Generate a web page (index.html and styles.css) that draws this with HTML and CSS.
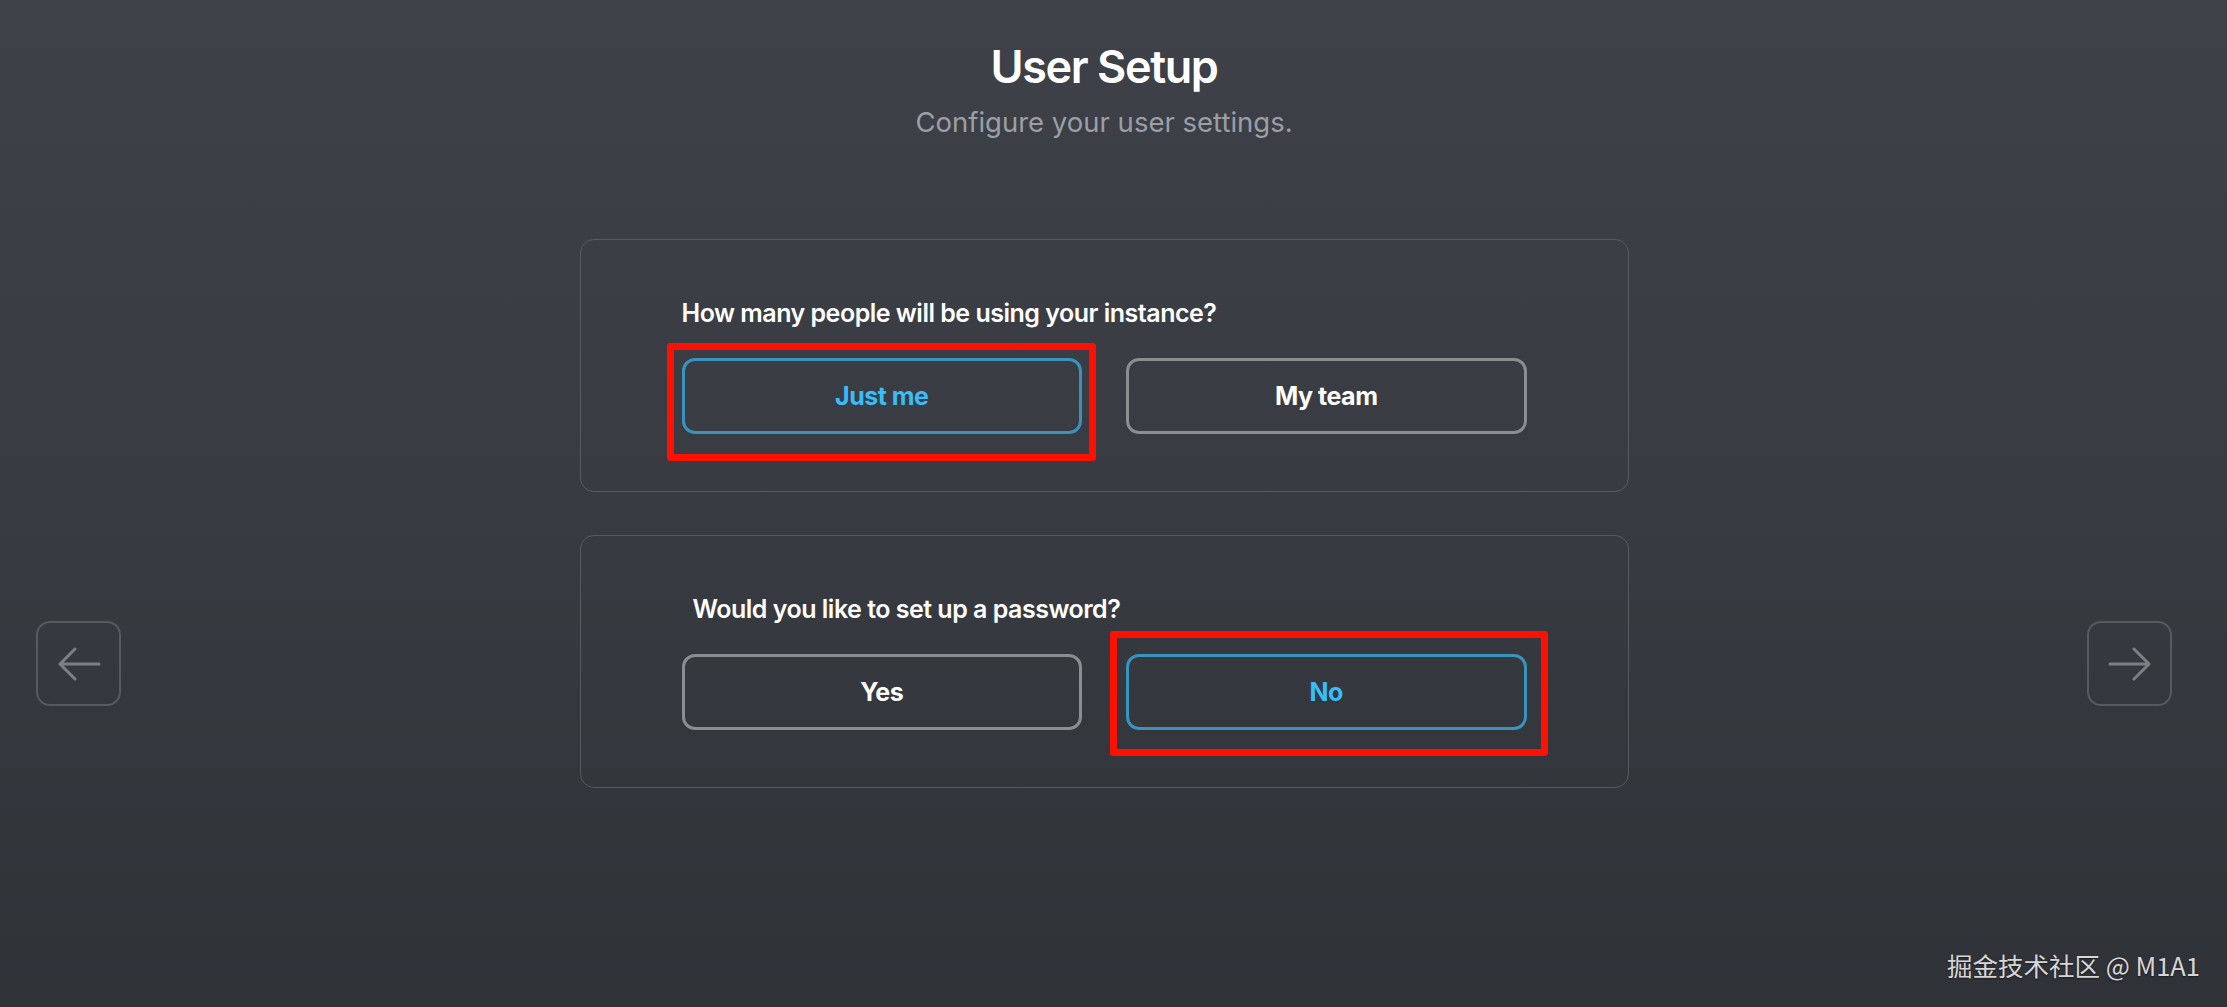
FILE: index.html
```html
<!DOCTYPE html>
<html lang="en">
<head>
    <meta charset="UTF-8">
    <title>User Setup</title>
    <link rel="stylesheet" href="styles.css">
</head>
<body>
    <div class="setup">
        <button class="nav-btn">
            <svg width="44" height="34" viewBox="0 0 44 34"><path d="M42 17H3M3 17L18 2M3 17L18 32"/></svg>
        </button>

        <main class="content">
            <h1>User Setup</h1>
            <p class="subtitle">Configure your user settings.</p>

            <section class="card">
                <h2 class="question">How many people will be using your instance?</h2>
                <div class="choices">
                    <div class="choice mark mark-first">
                        <button class="option selected">Just me</button>
                    </div>
                    <div class="choice">
                        <button class="option">My team</button>
                    </div>
                </div>
            </section>

            <section class="card">
                <h2 class="question question-inset">Would you like to set up a password?</h2>
                <div class="choices">
                    <div class="choice">
                        <button class="option">Yes</button>
                    </div>
                    <div class="choice mark mark-second">
                        <button class="option selected">No</button>
                    </div>
                </div>
            </section>
        </main>

        <button class="nav-btn">
            <svg width="44" height="34" viewBox="0 0 44 34"><path d="M2 17H41M41 17L26 2M41 17L26 32"/></svg>
        </button>
    </div>

    <div class="watermark">掘金技术社区 @ M1A1</div>
</body>
</html>
```

FILE: styles.css
```css
html, body {
    margin: 0;
    padding: 0;
    height: 100%;
}

body {
    background: linear-gradient(180deg, #3e4148 0%, #383b41 50%, #2f3237 100%);
    font-family: "Inter", "Noto Sans CJK SC", sans-serif;
    color: #ffffff;
    overflow: hidden;
}

.setup {
    width: calc(100% - 20px);
    display: grid;
    grid-template-columns: 85px 1fr 85px;
    padding: 0 35px 0 36px;
    box-sizing: border-box;
}

.nav-btn {
    margin-top: 621px;
    width: 85px;
    height: 85px;
    align-self: start;
    display: flex;
    align-items: center;
    justify-content: center;
    background: transparent;
    border: 2px solid #565a61;
    border-radius: 14px;
    padding: 0;
    cursor: pointer;
}

.nav-btn svg path {
    fill: none;
    stroke: #7b7f86;
    stroke-width: 3;
    stroke-linecap: round;
    stroke-linejoin: round;
}

.content {
    display: flex;
    flex-direction: column;
    align-items: center;
    padding-top: 39px;
}

h1 {
    margin: 0;
    font-size: 45px;
    line-height: 56px;
    font-weight: 600;
    letter-spacing: -1.4px;
}

.subtitle {
    margin: 11px 0 0;
    font-size: 27.5px;
    line-height: 32px;
    color: #9b9fa6;
    letter-spacing: 0;
}

.card {
    width: 1049px;
    box-sizing: border-box;
    margin-top: 43px;
    padding: 58px 101px 57px;
    border: 1px solid #575a61;
    border-radius: 14px;
}

.subtitle + .card {
    margin-top: 101px;
}

.question {
    margin: 0 0 30px;
    font-size: 25px;
    line-height: 30px;
    font-weight: 600;
    letter-spacing: -0.5px;
}

.question-inset {
    margin-left: 11px;
}

.choices {
    display: grid;
    grid-template-columns: 1fr 1fr;
    gap: 44px;
}

.choice {
    position: relative;
}

.option {
    width: 100%;
    height: 76px;
    background: transparent;
    border: 3px solid #8a8d92;
    border-radius: 13px;
    color: #ffffff;
    font-family: inherit;
    font-size: 25px;
    font-weight: 700;
    letter-spacing: -0.5px;
    cursor: pointer;
}

.option.selected {
    border-color: #3994bd;
    color: #38bdf8;
}

/* red annotation frames around the chosen answers */
.mark::after {
    content: "";
    position: absolute;
    border: 7px solid #ff1000;
    border-radius: 3px;
    pointer-events: none;
}

.mark-first::after {
    top: -15px;
    left: -15px;
    right: -14px;
    bottom: -27px;
}

.mark-second::after {
    top: -23px;
    left: -16px;
    right: -21px;
    bottom: -26px;
}

.watermark {
    position: absolute;
    right: 27px;
    bottom: 27px;
    font-family: "Noto Sans CJK SC", sans-serif;
    font-size: 25.5px;
    line-height: 30px;
    color: #d6d6d6;
    text-shadow: 0 1px 2px rgba(0, 0, 0, 0.5);
}
```
